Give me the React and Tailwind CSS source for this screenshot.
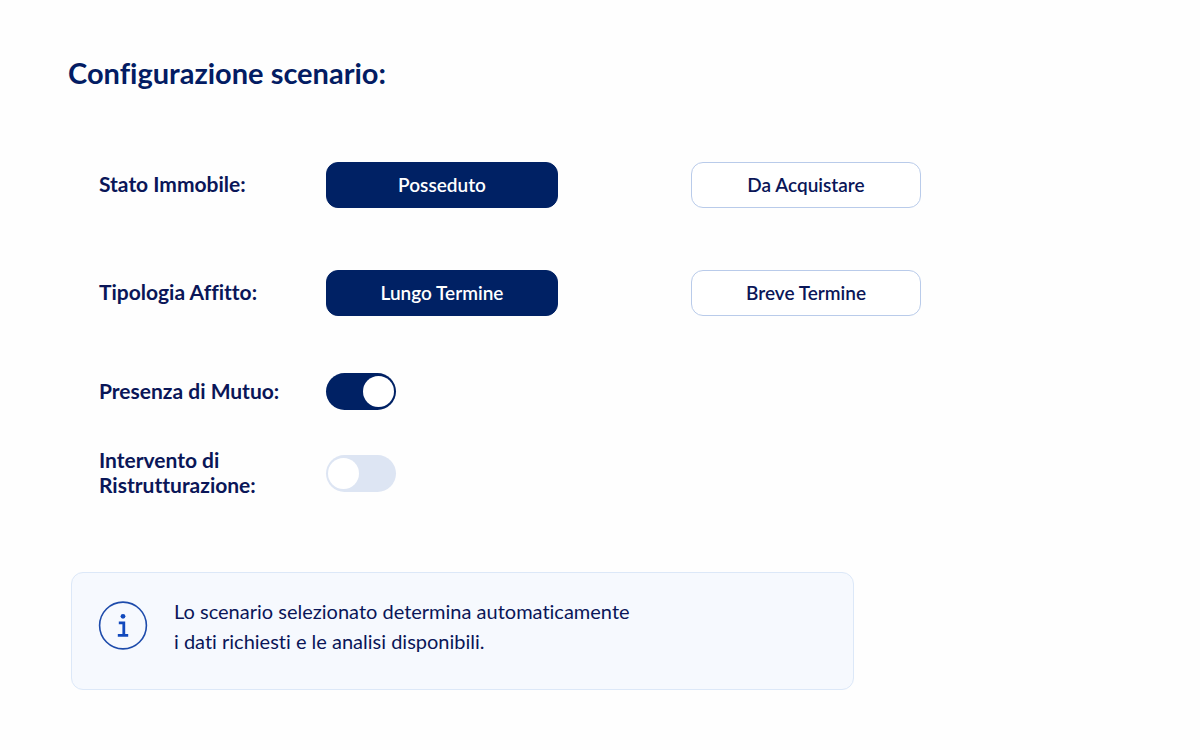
import { useState } from 'react';
import clsx from 'clsx';

const choices = [
  { id: 'stato', label: 'Stato Immobile:', options: ['Posseduto', 'Da Acquistare'] },
  { id: 'affitto', label: 'Tipologia Affitto:', options: ['Lungo Termine', 'Breve Termine'] },
];

function OptionButton({ active, onClick, children }) {
  return (
    <button
      type="button"
      aria-pressed={active}
      onClick={onClick}
      className={clsx(
        'h-[46px] w-full max-w-[232px] rounded-xl border text-[19px] font-semibold',
        active
          ? 'border-[#002164] bg-[#002164] text-white'
          : 'border-[#b9cbea] bg-white text-[#0a1658]'
      )}
    >
      {children}
    </button>
  );
}

function Toggle({ id, checked, onChange }) {
  return (
    <input
      id={id}
      type="checkbox"
      role="switch"
      checked={checked}
      onChange={(e) => onChange(e.target.checked)}
      className="flex h-[37px] w-[70px] cursor-pointer appearance-none items-center rounded-full bg-[#dde5f3] px-[2px] before:size-[31px] before:rounded-full before:bg-white checked:justify-end checked:bg-[#002164]"
    />
  );
}

function InfoIcon() {
  return (
    <svg className="size-[50px] shrink-0" viewBox="0 0 50 50" fill="none" aria-hidden="true">
      <circle cx="25" cy="24.5" r="23.4" stroke="#1d4bab" strokeWidth="1.6" />
      <circle cx="25" cy="15.3" r="2.4" fill="#1149bd" />
      <path d="M20.8 21.8h5v12.6M19.8 34.4h10.4" stroke="#1149bd" strokeWidth="2.8" />
    </svg>
  );
}

export default function App() {
  const [selected, setSelected] = useState({ stato: 'Posseduto', affitto: 'Lungo Termine' });
  const [mutuo, setMutuo] = useState(true);
  const [ristrutturazione, setRistrutturazione] = useState(false);

  return (
    <main className="min-h-screen bg-[#fefefe] px-[68px] pt-[53px] pb-10 font-['Lato',sans-serif] text-[#0a1658] [font-variant-ligatures:none]">
      <h1 className="text-[29px] leading-10 font-bold text-[#031c63]">Configurazione scenario:</h1>

      <form className="mt-[69px] ml-[31px] max-w-[822px]">
        <div className="flex flex-col gap-[62px]">
          {choices.map(({ id, label, options }) => (
            <div
              key={id}
              role="group"
              aria-labelledby={id}
              className="grid grid-cols-[227px_minmax(0,365px)_minmax(0,230px)] items-center"
            >
              <span id={id} className="pb-[3px] text-[21px] leading-[25px] font-bold">{label}</span>
              {options.map((option) => (
                <OptionButton
                  key={option}
                  active={selected[id] === option}
                  onClick={() => setSelected({ ...selected, [id]: option })}
                >
                  {option}
                </OptionButton>
              ))}
            </div>
          ))}
        </div>

        <div className="mt-[57px] grid grid-cols-[227px_1fr] items-center gap-y-[37px]">
          <label htmlFor="mutuo" className="pb-[3px] text-[21px] leading-[25px] font-bold">
            Presenza di Mutuo:
          </label>
          <Toggle id="mutuo" checked={mutuo} onChange={setMutuo} />
          <label htmlFor="ristrutturazione" className="pb-[3px] text-[21px] leading-[25px] font-bold">
            Intervento di
            <br />
            Ristrutturazione:
          </label>
          <Toggle id="ristrutturazione" checked={ristrutturazione} onChange={setRistrutturazione} />
        </div>
      </form>

      <aside className="mt-[72px] ml-[3px] flex max-w-[783px] items-start gap-[26px] rounded-xl border border-[#dce8f8] bg-[#f6f9fe] px-[26px] pt-[23px] pb-[33px]">
        <div className="pt-[5px]">
          <InfoIcon />
        </div>
        <p className="text-xl leading-[30px]">
          Lo scenario selezionato determina automaticamente
          <br />
          i dati richiesti e le analisi disponibili.
        </p>
      </aside>
    </main>
  );
}
